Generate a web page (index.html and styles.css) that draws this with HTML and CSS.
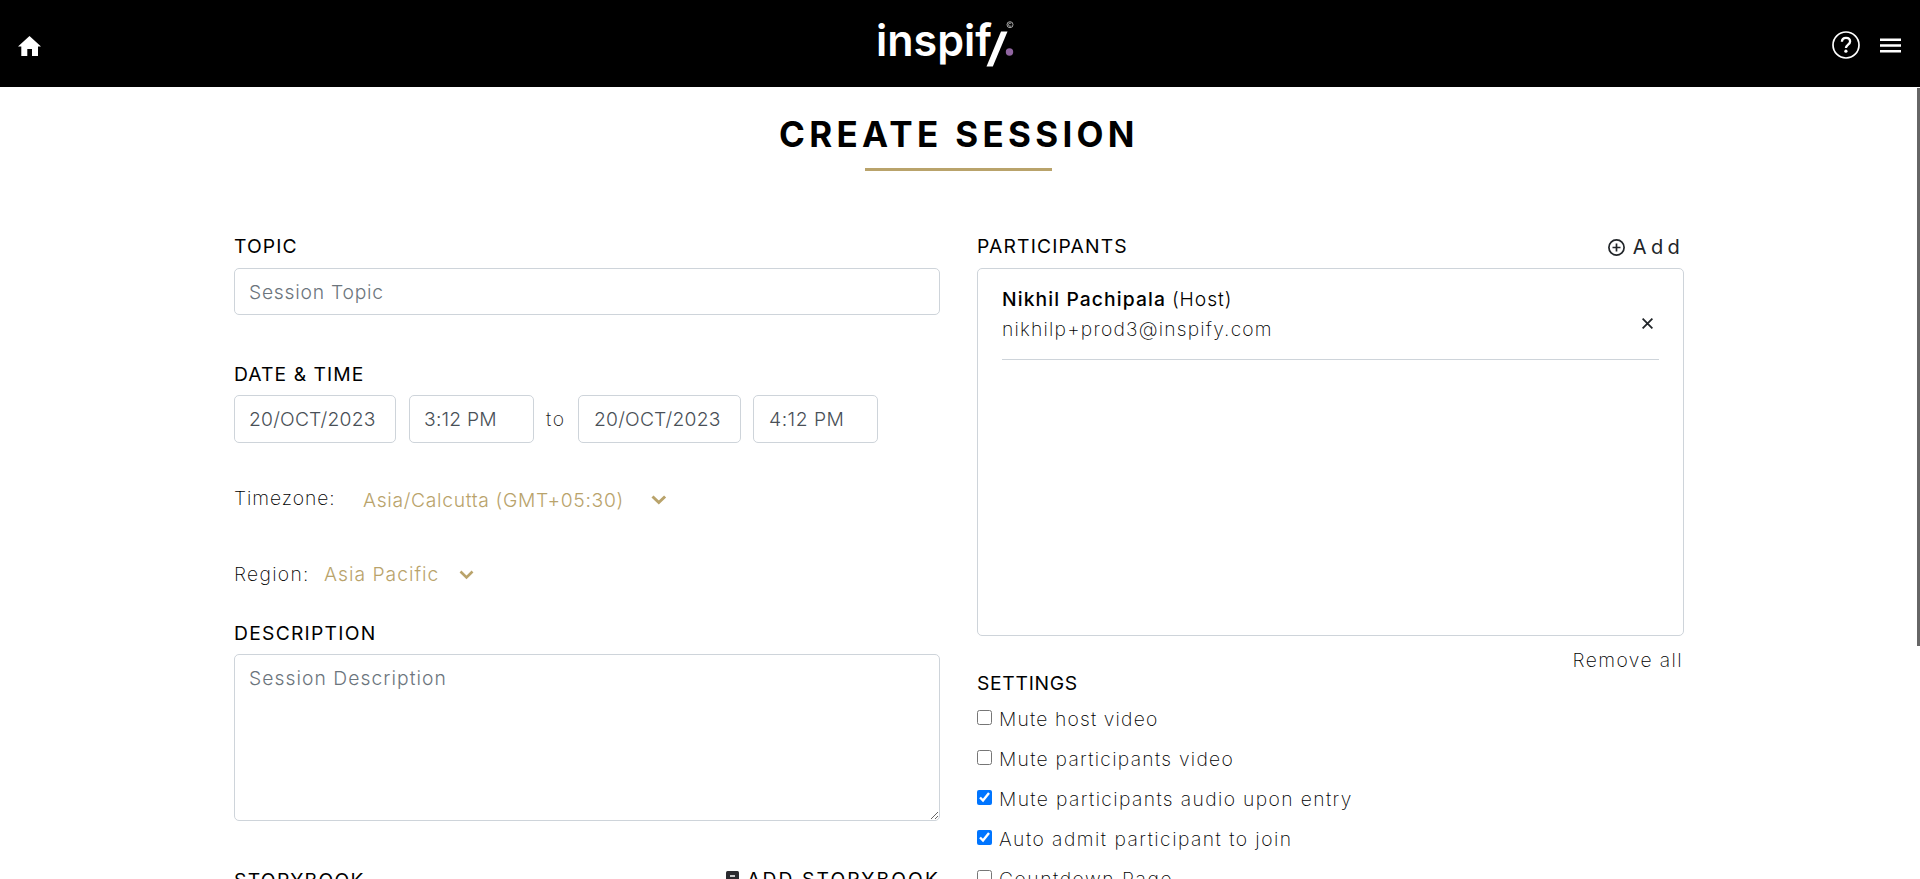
FILE: index.html
```
<!DOCTYPE html>
<html lang="en">
<head>
<meta charset="utf-8">
<title>Create Session</title>
<link rel="stylesheet" href="styles.css">
</head>
<body>
<header class="topbar">
  <svg class="home" width="24" height="20" viewBox="0 0 24 20"><path fill="#fff" d="M11.500 0 23 10.500h-3V20h-6v-7H9.300v7h-6v-9.500H0z"/></svg>
  <svg class="logo" width="144" height="60" viewBox="0 0 144 60">
    <g class="logo-word"><text x="1" y="41.500" textLength="116" lengthAdjust="spacingAndGlyphs">inspif</text></g>
    <path d="M111.500 52.500 126 17.500h6.500L117.800 52.500z" fill="#fff"/>
    <circle cx="134.500" cy="38" r="3.700" fill="#9065a0"/>
    <circle cx="135" cy="10.700" r="3" fill="none" stroke="#ccc" stroke-width=".8"/>
    <path d="M136.200 9.600a1.600 1.600 0 1 0 0 2.200" fill="none" stroke="#ccc" stroke-width=".8"/>
  </svg>
  <div class="actions">
    <svg width="28" height="28" viewBox="0 0 28 28" fill="none" stroke="#fff"><circle cx="14" cy="14" r="13" stroke-width="1.700"/><path stroke-width="2.300" d="M9.900 10.800c.1-2.500 1.800-4 4.100-4s4.100 1.400 4.100 3.600c0 3.100-4.200 3.200-4.200 6.700"/><circle cx="13.900" cy="20.200" r="1.600" fill="#fff" stroke="none"/></svg>
    <svg class="menu" width="21" height="15" viewBox="0 0 21 15" fill="#fff"><path d="M0 .500h21v2.500H0zM0 6.200h21v2.500H0zM0 11.900h21v2.500H0z"/></svg>
  </div>
</header>
<div class="scroll-thumb"></div>
<main class="page">
  <h1 class="title">CREATE SESSION</h1>
  <div class="rule"></div>
  <div class="columns">
    <section class="col">
      <label class="label topic">TOPIC</label>
      <input class="field topic-input" placeholder="Session Topic">
      <label class="label date-label">DATE &amp; TIME</label>
      <div class="dates">
        <input class="field date" value="20/OCT/2023">
        <input class="field time" value="3:12 PM">
        <span class="to">to</span>
        <input class="field date second" value="20/OCT/2023">
        <input class="field time late" value="4:12 PM">
      </div>
      <div class="pick zone">
        <span class="pick-name">Timezone:</span><span class="pick-value">Asia/Calcutta (GMT+05:30)</span>
        <svg width="16" height="10" viewBox="0 0 16 10" fill="none" stroke="#b9a36b" stroke-width="3"><path d="m1.500 1.500 6.300 6 6.300-6"/></svg>
      </div>
      <div class="pick region">
        <span class="pick-name">Region:</span><span class="pick-value">Asia Pacific</span>
        <svg width="16" height="10" viewBox="0 0 16 10" fill="none" stroke="#b9a36b" stroke-width="2.600"><path d="m1.500 1.500 6 6 6-6"/></svg>
      </div>
      <label class="label desc-label">DESCRIPTION</label>
      <textarea class="field desc" placeholder="Session Description"></textarea>
      <div class="story">
        <span class="label story-label">STORYBOOK</span>
        <button class="story-add"><svg width="13" height="15" viewBox="0 0 13 15"><rect width="13" height="15" rx="1.500" fill="#2b2b2f"/><path d="M4 5h5" stroke="#fff" stroke-width="1.500"/></svg>ADD STORYBOOK</button>
      </div>
    </section>
    <section class="col">
      <div class="people-head">
        <span class="label people-label">PARTICIPANTS</span>
        <button class="add"><svg width="17" height="17" viewBox="0 0 17 17" fill="none" stroke="#212529" stroke-width="1.700"><circle cx="8.500" cy="8.500" r="7.600"/><path d="M8.500 4.500v8M4.500 8.500h8"/></svg>Add</button>
      </div>
      <div class="people">
        <div class="person">
          <div>
            <div class="name"><b>Nikhil Pachipala</b><span class="host">(Host)</span></div>
            <div class="mail">nikhilp+prod3@inspify.com</div>
          </div>
          <svg class="close" width="11" height="11" viewBox="0 0 11 11" stroke="#212529" stroke-width="1.800"><path d="m.6.6 9.800 9.800M10.400.6.6 10.400"/></svg>
        </div>
      </div>
      <div class="remove">Remove all</div>
      <div class="label settings-label">SETTINGS</div>
      <label class="option o1"><input type="checkbox"><span>Mute host video</span></label>
      <label class="option o2"><input type="checkbox"><span>Mute participants video</span></label>
      <label class="option o3"><input type="checkbox" checked><span>Mute participants audio upon entry</span></label>
      <label class="option o4"><input type="checkbox" checked><span>Auto admit participant to join</span></label>
      <label class="option o5"><input type="checkbox"><span>Countdown Page</span></label>
    </section>
  </div>
</main>
</body>
</html>
```
FILE: styles.css
```
* { box-sizing: border-box; }
html, body { height: 100%; }
body {
  margin: 0;
  overflow: hidden;
  background: #fff;
  color: #000;
  font: 250 19.3px/30px Inter, "Open Sans", sans-serif;
  white-space: nowrap;
}
svg { display: block; flex: none; }
button { border: 0; padding: 0; background: none; color: #212529; font: inherit; font-weight: 400; display: flex; }

.topbar {
  height: 87px;
  background: #000;
  display: grid;
  grid-template-columns: 1fr 144px 1fr;
  align-items: center;
  padding: 0 19px 0 18px;
}
.home { margin-top: 4px; }
.logo { margin-left: -13px; }
.logo-word { font: 600 44px Inter, sans-serif; fill: #fff; }
.actions { display: flex; justify-content: flex-end; align-items: center; gap: 20px; padding-top: 3px; }
.menu { margin-top: 1px; }
.scroll-thumb { position: absolute; right: 0; top: 88px; width: 3px; height: 558px; background: #666; }

.page { width: 1450px; margin: 0 auto; }
.title { margin: 27px 0 0; padding-left: 544px; font-size: 35px; line-height: 40px; font-weight: 700; letter-spacing: 4.3px; }
.rule { width: 187px; height: 3px; background: #b9a36b; margin: 14px 0 0 630px; }
.columns { display: grid; grid-template-columns: 706px 707px; gap: 37px; padding-top: 60px; margin: 0 -1px; }
.col { display: flex; flex-direction: column; }
.label { font-weight: 420; line-height: 30px; }
.topic { letter-spacing: 1.1px; }

.field {
  border: 1px solid #ced4da;
  border-radius: 5px;
  background: #fff;
  padding: 0 0 0 14px;
  font: 300 19.3px/30px Inter, sans-serif;
  color: #495057;
  outline: 0;
}
.field::placeholder { color: #6c757d; opacity: 1; }
.topic-input { height: 47px; margin-top: 7px; letter-spacing: .75px; }
.date-label { margin-top: 44px; letter-spacing: 1.05px; }
.dates { display: flex; margin-top: 6px; height: 48px; }
.date { width: 162px; letter-spacing: .2px; }
.time { width: 125px; margin-left: 13px; padding-left: 14px; letter-spacing: .2px; }
.to { width: 44px; padding-left: 12px; line-height: 49px; letter-spacing: 1.800px; color: #222; }
.second { width: 163px; padding-left: 15px; }
.late { margin-left: 12px; padding-left: 15px; letter-spacing: .5px; }

.pick { display: flex; height: 30px; color: #b9a36b; }
.pick-name { color: #000; }
.pick-value { font-weight: 360; }
.zone { margin-top: 40px; }
.zone .pick-name { width: 129px; letter-spacing: .95px; }
.zone .pick-value { width: 288px; padding-top: 2px; letter-spacing: .67px; }
.zone svg { margin-top: 12px; }
.region { margin-top: 46px; }
.region .pick-name { width: 90px; letter-spacing: 1.3px; }
.region .pick-value { width: 135px; letter-spacing: 1px; }
.region svg { margin-top: 11px; }

.desc-label { margin-top: 29px; letter-spacing: 1.25px; }
.desc { height: 167px; margin-top: 6px; padding: 8px 0 0 14px; letter-spacing: 1.05px; resize: vertical; }
.story { display: flex; justify-content: space-between; margin-top: 44px; }
.story-label { letter-spacing: 1.3px; }
.story-add { line-height: 28px; letter-spacing: 2.1px; color: #000; }
.story-add svg { margin: 6px 8px 0 0; }

.people-head { display: flex; justify-content: space-between; height: 30px; }
.people-label { letter-spacing: 1.15px; }
.add { line-height: 32px; letter-spacing: 4.300px; font-size: 20px; }
.add svg { margin: 8px 8px 0 0; }
.people { height: 368px; margin-top: 7px; border: 1px solid #ced4da; border-radius: 5px; padding: 0 24px; }
.person { display: flex; justify-content: space-between; height: 91px; padding-top: 15px; border-bottom: 1px solid #ced4da; }
.name { letter-spacing: 1.1px; }
.name b { font-weight: 460; }
.host { font-weight: 300; margin-left: 6px; letter-spacing: .92px; }
.mail { letter-spacing: 1.2px; }
.close { margin: 34px 6px 0 0; }
.remove { line-height: 22px; margin-top: 13px; text-align: right; letter-spacing: 1.4px; padding-right: 1px; }
.settings-label { line-height: 22px; margin-top: 1px; letter-spacing: .7px; }
.option { display: flex; height: 40px; line-height: 40px; }
.option:first-of-type { margin-top: 5px; }
.option input { width: 15px; height: 15px; margin: 11px 7px 0 0; }
.o1 { letter-spacing: 1.17px; }
.o2 { letter-spacing: 1.28px; }
.o3 { letter-spacing: 1.38px; }
.o4 { letter-spacing: 1.47px; }
.o5 { letter-spacing: 1.54px; }
```
